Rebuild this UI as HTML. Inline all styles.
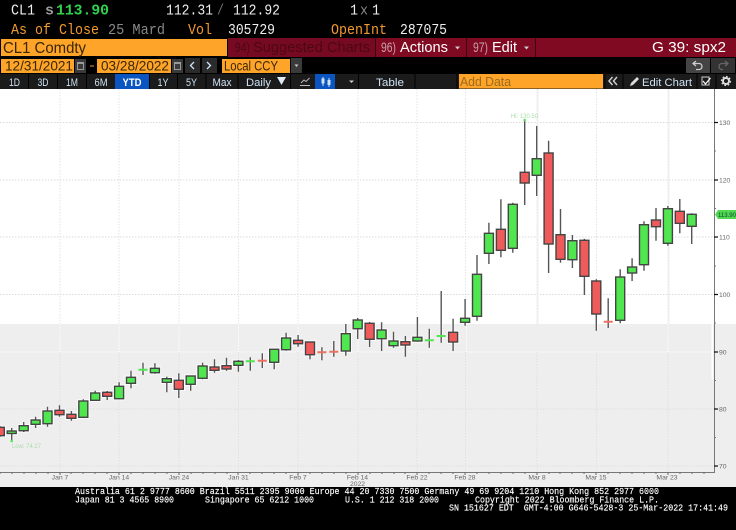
<!DOCTYPE html>
<html><head><meta charset="utf-8"><style>
html,body{margin:0;padding:0;background:#000;width:736px;height:530px;overflow:hidden}
svg{display:block}
.m{font-family:"Liberation Mono",monospace}
.s{font-family:"Liberation Sans",sans-serif}
.ax{font-family:"Liberation Sans",sans-serif;font-size:6.8px;fill:#666}
.f{font-family:"Liberation Mono",monospace;font-size:9px;fill:#fff;stroke:#fff;stroke-width:.15}
.t{font-family:"Liberation Sans",sans-serif;font-size:11px;fill:#cfe3f5;text-anchor:middle}
.chart{filter:blur(.3px)}
</style></head><body>
<svg width="736" height="530" viewBox="0 0 736 530" xmlns="http://www.w3.org/2000/svg">
<rect width="736" height="530" fill="#000"/>

<!-- Header rows -->
<g class="m" font-size="15" lengthAdjust="spacingAndGlyphs">
<text x="11" y="14.500" fill="#eee" textLength="24" lengthAdjust="spacingAndGlyphs">CL1</text>
<text x="45" y="14.500" fill="#999" font-weight="bold" textLength="9" lengthAdjust="spacingAndGlyphs">s</text>
<text x="56" y="14.500" fill="#2fd24e" font-weight="bold" textLength="53" lengthAdjust="spacingAndGlyphs">113.90</text>
<text x="166" y="14.500" fill="#eee" textLength="47" lengthAdjust="spacingAndGlyphs">112.31</text>
<text x="217" y="14.500" fill="#777" textLength="7" lengthAdjust="spacingAndGlyphs">/</text>
<text x="233" y="14.500" fill="#eee" textLength="47" lengthAdjust="spacingAndGlyphs">112.92</text>
<text x="350" y="14.500" fill="#eee" textLength="8" lengthAdjust="spacingAndGlyphs">1</text>
<text x="360" y="14.500" fill="#888" textLength="8" lengthAdjust="spacingAndGlyphs">x</text>
<text x="372" y="14.500" fill="#eee" textLength="8" lengthAdjust="spacingAndGlyphs">1</text>
<text x="11" y="34" fill="#f39a2d" textLength="88" lengthAdjust="spacingAndGlyphs">As of Close</text>
<text x="108" y="34" fill="#888" textLength="57" lengthAdjust="spacingAndGlyphs">25 Mard</text>
<text x="188" y="34" fill="#f39a2d" textLength="24" lengthAdjust="spacingAndGlyphs">Vol</text>
<text x="228" y="34" fill="#eee" textLength="47" lengthAdjust="spacingAndGlyphs">305729</text>
<text x="331" y="34" fill="#f39a2d" textLength="56" lengthAdjust="spacingAndGlyphs">OpenInt</text>
<text x="400" y="34" fill="#eee" textLength="47" lengthAdjust="spacingAndGlyphs">287075</text>
</g>

<!-- Command row -->
<rect x="1" y="39" width="226" height="17" fill="#fea428"/>
<text class="s" x="3" y="53" font-size="16" fill="#3a2605" textLength="83" lengthAdjust="spacingAndGlyphs">CL1 Comdty</text>
<rect x="228" y="38" width="508" height="19" fill="#7f0a22"/>
<rect x="228" y="38" width="147" height="19" fill="#760a22"/>
<text class="s" x="235" y="52" font-size="14" fill="#4d0715" textLength="15" lengthAdjust="spacingAndGlyphs">94)</text>
<text class="s" x="253" y="52" font-size="15" fill="#4d0715" textLength="117" lengthAdjust="spacingAndGlyphs">Suggested Charts</text>
<rect x="375" y="38" width="1" height="19" fill="#3a0512"/>
<text class="s" x="381" y="52" font-size="14" fill="#c9a0a9" textLength="15" lengthAdjust="spacingAndGlyphs">96)</text>
<text class="s" x="400" y="52" font-size="15" fill="#fff" textLength="48" lengthAdjust="spacingAndGlyphs">Actions</text>
<path d="M455 46.500h5l-2.500 3z" fill="#ccc"/>
<rect x="466" y="38" width="1" height="19" fill="#3a0512"/>
<text class="s" x="473" y="52" font-size="14" fill="#c9a0a9" textLength="15" lengthAdjust="spacingAndGlyphs">97)</text>
<text class="s" x="492" y="52" font-size="15" fill="#fff" textLength="25" lengthAdjust="spacingAndGlyphs">Edit</text>
<path d="M524 46.500h5l-2.500 3z" fill="#ccc"/>
<rect x="535" y="38" width="1" height="19" fill="#3a0512"/>
<text class="s" x="652" y="52" font-size="15" fill="#fff" textLength="74" lengthAdjust="spacingAndGlyphs">G 39: spx2</text>

<!-- Date row -->
<rect x="1" y="59" width="73" height="14" fill="#fea428"/>
<text class="s" x="5" y="70.500" font-size="14" fill="#3a2605" textLength="68" lengthAdjust="spacingAndGlyphs">12/31/2021</text>
<rect x="75" y="59" width="11" height="14" fill="#3a3a3a"/>
<rect x="77.500" y="62.500" width="6" height="7" fill="none" stroke="#999"/><rect x="77" y="62" width="7" height="2" fill="#999"/>
<rect x="90" y="65.500" width="4" height="1" fill="#f39a2d"/>
<rect x="97" y="59" width="74" height="14" fill="#fea428"/>
<text class="s" x="101" y="70.500" font-size="14" fill="#3a2605" textLength="68" lengthAdjust="spacingAndGlyphs">03/28/2022</text>
<rect x="172" y="59" width="11" height="14" fill="#3a3a3a"/>
<rect x="174.500" y="62.500" width="6" height="7" fill="none" stroke="#999"/><rect x="174" y="62" width="7" height="2" fill="#999"/>
<rect x="185" y="58" width="15" height="15" fill="#2b2b2b"/>
<rect x="202" y="58" width="15" height="15" fill="#2b2b2b"/>
<path d="M194 62l-3.500 3.500 3.500 3.500" fill="none" stroke="#cfe3f5" stroke-width="1.300"/>
<path d="M207 62l3.500 3.500-3.500 3.500" fill="none" stroke="#cfe3f5" stroke-width="1.300"/>
<rect x="222" y="59" width="68" height="14" fill="#fea428"/>
<text class="s" x="224" y="70.500" font-size="14" fill="#3a2605" textLength="54" lengthAdjust="spacingAndGlyphs">Local CCY</text>
<rect x="291" y="58" width="11" height="15" fill="#3a3a3a"/>
<path d="M294.500 64.500h4l-2 2.500z" fill="#ccc"/>
<rect x="686" y="58" width="24" height="15" fill="#444"/>
<rect x="711" y="58" width="24" height="15" fill="#333"/>
<path d="M696 61l-3 2.500 3 2.500M693 63.500h6c2 0 3 1.500 3 3s-1 3-3 3h-3" fill="none" stroke="#ccc" stroke-width="1.300"/>
<path d="M725 61l3 2.500-3 2.500M728 63.500h-6c-2 0-3 1.500-3 3s1 3 3 3h1" fill="none" stroke="#666" stroke-width="1.300"/>

<!-- Tabs row -->
<rect x="0" y="74" width="736" height="15" fill="#1b1b1b"/>
<path d="M28.500 74v15M57.500 74v15M86.500 74v15M149.500 74v15M177.500 74v15M206 74v15M238 74v15M290.500 74v15M358.500 74v15M415 74v15M457 74v15M605 74v15M623 74v15M697 74v15M716 74v15" stroke="#000" stroke-width="1"/>
<rect x="115" y="74" width="34" height="15" fill="#0b55c0"/>
<rect x="315" y="74" width="20" height="15" fill="#0b55c0"/>
<g class="t">
<text x="14.500" y="86" textLength="11" lengthAdjust="spacingAndGlyphs">1D</text>
<text x="43" y="86" textLength="11" lengthAdjust="spacingAndGlyphs">3D</text>
<text x="72" y="86" textLength="12" lengthAdjust="spacingAndGlyphs">1M</text>
<text x="101" y="86" textLength="13" lengthAdjust="spacingAndGlyphs">6M</text>
<text x="132" y="86" fill="#fff" font-weight="bold" textLength="19" lengthAdjust="spacingAndGlyphs">YTD</text>
<text x="163" y="86" textLength="11" lengthAdjust="spacingAndGlyphs">1Y</text>
<text x="191.500" y="86" textLength="11" lengthAdjust="spacingAndGlyphs">5Y</text>
<text x="222" y="86" textLength="19" lengthAdjust="spacingAndGlyphs">Max</text>
<text x="258.500" y="86" textLength="25" lengthAdjust="spacingAndGlyphs">Daily</text>
<text x="390" y="86" textLength="28" lengthAdjust="spacingAndGlyphs">Table</text>
</g>
<path d="M277 77h9l-4.500 8z" fill="#dfeaf5"/>
<path d="M300 85.500h10M301 83l3-3 2 1.500 3.500-3.500" fill="none" stroke="#bbb" stroke-width=".9"/>
<path d="M323 77v9M329 78v9" stroke="#cfe3f5"/><rect x="321.500" y="78.500" width="3" height="5" fill="#cfe3f5"/><rect x="327.500" y="80" width="3" height="5" fill="#cfe3f5"/>
<path d="M349 80.500h5l-2.500 2.500z" fill="#ccc"/>
<rect x="459" y="74" width="144" height="14.500" fill="#fea428"/>
<text class="s" x="460" y="86" font-size="12.500" fill="#9c6a20" textLength="51" lengthAdjust="spacingAndGlyphs">Add Data</text>
<path d="M612.500 77l-3.500 4 3.500 4M617 77l-3.500 4 3.500 4" fill="none" stroke="#ccc" stroke-width="1.500"/>
<path d="M630 86l1-3 6-6 2 2-6 6z" fill="#ddd"/>
<text class="t" x="667" y="86" textLength="50" lengthAdjust="spacingAndGlyphs" fill="#fff">Edit Chart</text>
<rect x="702" y="77" width="7" height="8" fill="none" stroke="#ccc"/><path d="M703 81l2.500 3 5-6" fill="none" stroke="#fff" stroke-width="1.200"/>
<circle cx="726" cy="81" r="3" fill="none" stroke="#ddd" stroke-width="2"/><circle cx="726" cy="81" r="4.500" fill="none" stroke="#ddd" stroke-width="1.300" stroke-dasharray="1.700 1.800"/>

<defs>
<path id="wk" d="M-.2 426V437M11.700 428V441M23.700 422V432M35.600 416.700V428M47.500 406.700V426.700M59.500 405.300V416.700M71.400 411V420.700M83.300 399.300V418M95.200 390.700V401M107.200 391V400M119.100 382.300V399.300M131 370.700V388.300M143 362.700V375M154.900 363.300V373.700M166.800 376.700V392.300M178.800 373.300V398M190.700 376V390.700M202.600 362.700V379.300M214.500 359.300V372.700M226.500 357.700V370.700M238.400 360V371.700M250.300 357.300V370.700M262.300 353.300V368M274.200 349.300V369.300M286.100 332.700V350.700M298.100 335V346.700M310 342V359.300M321.900 347.300V360.300M333.800 341V356.700M345.800 324V355.700M357.700 318V339M369.600 322V347M381.600 322.300V351M393.500 331.700V347.700M405.400 336V356.700M417.400 317V341.700M429.300 328.700V347.700M441.200 291V342.700M453.100 318.700V351M465.100 299V325.700M477 255V320.700M488.900 222.700V264M500.900 199.300V257.300M512.800 202.700V252.700M524.700 120V205M536.700 126V196M548.600 140.700V273M560.500 209V262.700M572.400 235V268M584.400 238.700V295M596.300 279.300V330.700M608.200 298.300V328M620.200 269.300V323.300M632.100 258.300V281M644 221.300V270.700M656 208V240.700M667.900 206V245.700M679.800 199V233.300M691.700 213.300V244"/>
<g id="gb">
<rect x="7.200" y="431" width="9" height="2.500"/><rect x="19.200" y="425.700" width="9" height="5"/><rect x="31.100" y="420" width="9" height="4.300"/><rect x="43" y="411" width="9" height="12.700"/><rect x="78.800" y="401" width="9" height="16.300"/><rect x="90.700" y="393" width="9" height="7.300"/><rect x="114.600" y="386.300" width="9" height="12.400"/><rect x="126.500" y="377.300" width="9" height="6"/><rect x="150.400" y="368.300" width="9" height="4.400"/><rect x="162.300" y="378.700" width="9" height="3.600"/><rect x="186.200" y="376" width="9" height="8.300"/><rect x="198.100" y="366" width="9" height="12.300"/><rect x="233.900" y="361.300" width="9" height="4"/><rect x="269.700" y="349.300" width="9" height="13"/><rect x="281.600" y="338" width="9" height="11.700"/><rect x="341.300" y="333.700" width="9" height="17.300"/><rect x="353.200" y="320" width="9" height="8.700"/><rect x="377.100" y="330" width="9" height="8.700"/><rect x="389" y="341" width="9" height="4.700"/><rect x="412.900" y="337.300" width="9" height="3.700"/><rect x="460.600" y="318.300" width="9" height="4"/><rect x="472.500" y="274.300" width="9" height="42"/><rect x="484.400" y="233.300" width="9" height="20"/><rect x="508.300" y="204.300" width="9" height="44"/><rect x="532.200" y="158.700" width="9" height="16.600"/><rect x="567.900" y="240.700" width="9" height="19"/><rect x="615.700" y="277" width="9" height="43.300"/><rect x="627.600" y="267" width="9" height="6"/><rect x="639.500" y="224.700" width="9" height="40"/><rect x="663.400" y="208.700" width="9" height="34.600"/><rect x="687.200" y="214.300" width="9" height="12"/>
</g>
<g id="rb">
<rect x="-4.700" y="427.300" width="9" height="8.400"/><rect x="55" y="410.300" width="9" height="4.400"/><rect x="66.900" y="414.300" width="9" height="4"/><rect x="102.700" y="392.300" width="9" height="4"/><rect x="174.300" y="380.300" width="9" height="9"/><rect x="210" y="367" width="9" height="3.300"/><rect x="222" y="365.700" width="9" height="3.300"/><rect x="293.600" y="340.300" width="9" height="3.400"/><rect x="305.500" y="342" width="9" height="12.700"/><rect x="365.100" y="323.300" width="9" height="16"/><rect x="400.900" y="341.700" width="9" height="3.300"/><rect x="448.600" y="332.300" width="9" height="9.700"/><rect x="496.400" y="229.300" width="9" height="21"/><rect x="520.200" y="172.300" width="9" height="10.700"/><rect x="544.100" y="153" width="9" height="91"/><rect x="556" y="234.700" width="9" height="24.600"/><rect x="579.900" y="240.300" width="9" height="36"/><rect x="591.800" y="281" width="9" height="33"/><rect x="651.500" y="220" width="9" height="6.700"/><rect x="675.300" y="211.300" width="9" height="12"/>
</g>
</defs>

<g class="chart">
<!-- Chart background -->
<rect x="0" y="89" width="736" height="235" fill="#fff"/>
<rect x="0" y="324" width="736" height="163" fill="#eee"/>

<!-- Grid -->
<g fill="none" stroke-dasharray="1.500 1.500">
<path d="M0 122.500H714M0 180H714M0 237H714M0 294.500H714" stroke="#d9d9d9"/>
<path d="M0 352H714" stroke="#fff"/>
<path d="M0 409H714M0 466H714" stroke="#ddd"/>
<path d="M60 89V324M119 89V324M179 89V324M238.500 89V324M298 89V324M358 89V324M417 89V324M465.500 89V324M537 89V324M596.500 89V324M668 89V324" stroke="#e3e3e3"/>
<path d="M298 324V352M358 324V352M466.500 324V352M668 324V352M60 324V352M119 324V352M179 324V352M238.500 324V352" stroke="#fff"/>
<path d="M60 352V472M119 352V472M179 352V472M238.500 352V472M298 352V472M358 352V472M417 352V472M465.500 352V472M537 352V472M596.500 352V472M668 352V472" stroke="#e0e0e0"/>
</g>
<rect x="537" y="89" width="1.500" height="235" fill="#efefef"/>
<rect x="668" y="89" width="1.500" height="235" fill="#efefef"/>
<rect x="711.500" y="324" width="1.500" height="56" fill="#fff"/>

<!-- Axes -->
<path d="M714.500 89V472.500H0" fill="none" stroke="#777" stroke-width="1"/>
<path d="M714 122.500h4M714 180h4M714 237h4M714 294.500h4M714 352h4M714 409h4M714 466h4" stroke="#111" stroke-width="1.200"/>
<path d="M714 151h2M714 208.500h2M714 266h2M714 323h2M714 380.500h2M714 437.500h2" stroke="#777"/>
<path d="M0 472.500v1.500M12 472.500v1.500M24 472.500v1.500M36 472.500v1.500M48 472.500v1.500M60 472.500v2.500M71 472.500v1.500M83 472.500v1.500M95 472.500v1.500M107 472.500v1.500M119 472.500v2.500M131 472.500v1.500M143 472.500v1.500M155 472.500v1.500M167 472.500v1.500M179 472.500v2.500M191 472.500v1.500M203 472.500v1.500M215 472.500v1.500M227 472.500v1.500M238 472.500v2.500M250 472.500v1.500M262 472.500v1.500M274 472.500v1.500M286 472.500v1.500M298 472.500v2.500M310 472.500v1.500M322 472.500v1.500M334 472.500v1.500M346 472.500v1.500M358 472.500v2.500M370 472.500v1.500M382 472.500v1.500M394 472.500v1.500M405 472.500v1.500M417 472.500v2.500M429 472.500v1.500M441 472.500v1.500M453 472.500v1.500M465 472.500v2.500M477 472.500v1.500M489 472.500v1.500M501 472.500v1.500M513 472.500v1.500M525 472.500v1.500M537 472.500v2.500M549 472.500v1.500M560 472.500v1.500M572 472.500v1.500M584 472.500v1.500M596 472.500v2.500M608 472.500v1.500M620 472.500v1.500M632 472.500v1.500M644 472.500v1.500M656 472.500v1.500M668 472.500v2.500M680 472.500v1.500M692 472.500v1.500M704 472.500v1.500" stroke="#666"/>
<g class="ax">
<text x="719" y="125">130</text><text x="719" y="182.500">120</text><text x="719" y="239.500">110</text><text x="719" y="297">100</text>
<text x="719" y="354.500">90</text><text x="719" y="411.500">80</text><text x="719" y="468.500">70</text>
<g text-anchor="middle">
<text x="60" y="479.500">Jan 7</text><text x="119" y="479.500">Jan 14</text><text x="179" y="479.500">Jan 24</text><text x="238.500" y="479.500">Jan 31</text>
<text x="298" y="479.500">Feb 7</text><text x="357.500" y="479.500">Feb 14</text><text x="357.500" y="486">2022</text><text x="417" y="479.500">Feb 22</text><text x="465" y="479.500">Feb 28</text>
<text x="537" y="479.500">Mar 8</text><text x="596" y="479.500">Mar 15</text><text x="667" y="479.500">Mar 23</text>
</g></g>

<!-- Candle halos -->
<use href="#wk" fill="none" stroke="#fff" stroke-width="3" stroke-opacity=".6"/>
<use href="#gb" fill="none" stroke="#fff" stroke-width="3.400" stroke-opacity=".8"/>
<use href="#rb" fill="none" stroke="#fff" stroke-width="3.400" stroke-opacity=".8"/>
<!-- Wicks -->
<use href="#wk" fill="none" stroke="#555" stroke-width="1.400"/>
<!-- Bodies -->
<use href="#gb" fill="#50e650" stroke="#444" stroke-width="1.400"/>
<use href="#rb" fill="#f05a5a" stroke="#444" stroke-width="1.400"/>
<!-- Doji -->
<path d="M138.500 369.700h9M245.800 361.300h9M424.800 340.300h9M436.700 336h9" stroke="#50e650" stroke-width="2"/>
<path d="M257.800 360.700h9M317.400 352.300h9M329.300 351.700h9M603.700 321.700h9" stroke="#f0705f" stroke-width="2"/>

<!-- Hi / Low -->
<circle cx="524.700" cy="120" r="1.300" fill="#50e650"/>
<circle cx="11.700" cy="441" r="1.300" fill="#50e650"/>
<text class="s" x="511" y="118" font-size="6.500" fill="#a9dba9" textLength="27" lengthAdjust="spacingAndGlyphs">Hi: 130.50</text>
<text class="s" x="12" y="448" font-size="6.500" fill="#a9dba9" textLength="29" lengthAdjust="spacingAndGlyphs">Low: 74.27</text>

<!-- Price tag -->
<path d="M715 214.500l3-4.500h18v9h-18z" fill="#50d850"/>
<text class="s" x="718" y="217" font-size="6.500" fill="#143" textLength="18" lengthAdjust="spacingAndGlyphs">113.90</text>
</g>

<!-- Footer -->
<g class="f">
<text x="75" y="494" textLength="584" lengthAdjust="spacingAndGlyphs">Australia 61 2 9777 8600 Brazil 5511 2395 9000 Europe 44 20 7330 7500 Germany 49 69 9204 1210 Hong Kong 852 2977 6000</text>
<text x="75" y="502.300" textLength="99" lengthAdjust="spacingAndGlyphs">Japan 81 3 4565 8900</text>
<text x="205" y="502.300" textLength="109" lengthAdjust="spacingAndGlyphs">Singapore 65 6212 1000</text>
<text x="345" y="502.300" textLength="94" lengthAdjust="spacingAndGlyphs">U.S. 1 212 318 2000</text>
<text x="475" y="502.300" textLength="184" lengthAdjust="spacingAndGlyphs">Copyright 2022 Bloomberg Finance L.P.</text>
<text x="449" y="510.500" textLength="279" lengthAdjust="spacingAndGlyphs" xml:space="preserve">SN 151627 EDT  GMT-4:00 G646-5428-3 25-Mar-2022 17:41:49</text>
</g>
</svg>
</body></html>
